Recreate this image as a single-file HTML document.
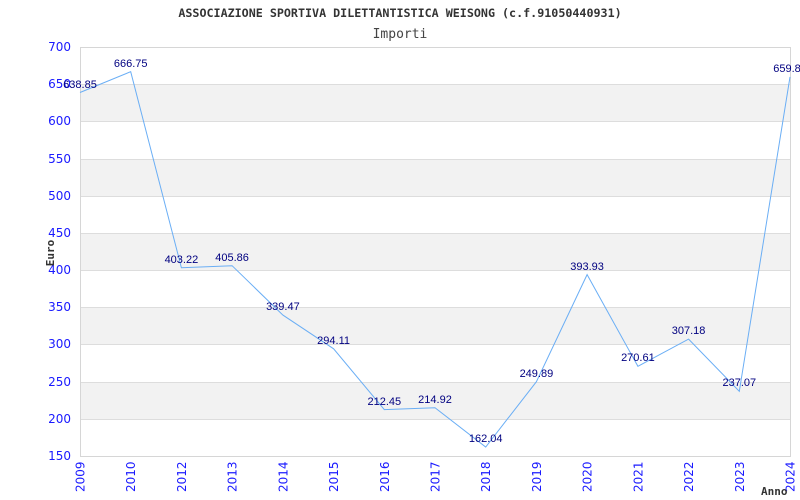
<!DOCTYPE html>
<html><head><meta charset="utf-8"><style>
html,body{margin:0;padding:0;background:#fff;}
svg{display:block;}
</style></head><body>
<svg width="800" height="500" xmlns="http://www.w3.org/2000/svg">
<rect width="800" height="500" fill="#fff"/>
<text x="400" y="17" text-anchor="middle" font-family="'DejaVu Sans Mono','Liberation Mono',monospace" font-weight="bold" font-size="11.7" fill="#333">ASSOCIAZIONE SPORTIVA DILETTANTISTICA WEISONG (c.f.91050440931)</text>
<text x="400" y="38" text-anchor="middle" font-family="'DejaVu Sans Mono','Liberation Mono',monospace" font-size="13" fill="#444">Importi</text>
<g fill="#f2f2f2">
<rect x="80" y="84" width="710" height="37"/>
<rect x="80" y="159" width="710" height="37"/>
<rect x="80" y="233" width="710" height="37"/>
<rect x="80" y="307" width="710" height="37"/>
<rect x="80" y="382" width="710" height="37"/>
</g>
<g stroke="#ddd" stroke-width="1">
<line x1="80" y1="84.5" x2="790" y2="84.5"/>
<line x1="80" y1="121.5" x2="790" y2="121.5"/>
<line x1="80" y1="159.5" x2="790" y2="159.5"/>
<line x1="80" y1="196.5" x2="790" y2="196.5"/>
<line x1="80" y1="233.5" x2="790" y2="233.5"/>
<line x1="80" y1="270.5" x2="790" y2="270.5"/>
<line x1="80" y1="307.5" x2="790" y2="307.5"/>
<line x1="80" y1="344.5" x2="790" y2="344.5"/>
<line x1="80" y1="382.5" x2="790" y2="382.5"/>
<line x1="80" y1="419.5" x2="790" y2="419.5"/>
</g>
<rect x="80.5" y="47.5" width="710" height="409" fill="none" stroke="#d6d6d6"/>
<g font-family="'DejaVu Sans','Liberation Sans',sans-serif" font-size="12" fill="#1a1aff" text-anchor="end">
<text x="71" y="51">700</text><text x="71" y="88">650</text><text x="71" y="125">600</text>
<text x="71" y="163">550</text><text x="71" y="200">500</text><text x="71" y="237">450</text>
<text x="71" y="274">400</text><text x="71" y="311">350</text><text x="71" y="348">300</text>
<text x="71" y="386">250</text><text x="71" y="423">200</text><text x="71" y="460">150</text>
</g>
<g font-family="'DejaVu Sans','Liberation Sans',sans-serif" font-size="12" fill="#1a1aff">
<text transform="translate(84.5,492) rotate(-90)">2009</text>
<text transform="translate(135.2,492) rotate(-90)">2010</text>
<text transform="translate(185.9,492) rotate(-90)">2012</text>
<text transform="translate(236.6,492) rotate(-90)">2013</text>
<text transform="translate(287.4,492) rotate(-90)">2014</text>
<text transform="translate(338.1,492) rotate(-90)">2015</text>
<text transform="translate(388.8,492) rotate(-90)">2016</text>
<text transform="translate(439.5,492) rotate(-90)">2017</text>
<text transform="translate(490.2,492) rotate(-90)">2018</text>
<text transform="translate(540.9,492) rotate(-90)">2019</text>
<text transform="translate(591.6,492) rotate(-90)">2020</text>
<text transform="translate(642.4,492) rotate(-90)">2021</text>
<text transform="translate(693.1,492) rotate(-90)">2022</text>
<text transform="translate(743.8,492) rotate(-90)">2023</text>
<text transform="translate(794.5,492) rotate(-90)">2024</text>
</g>
<text transform="translate(54,253) rotate(-90)" text-anchor="middle" font-family="'DejaVu Sans Mono','Liberation Mono',monospace" font-weight="bold" font-size="11" fill="#333">Euro</text>
<text x="761" y="495" font-family="'DejaVu Sans Mono','Liberation Mono',monospace" font-weight="bold" font-size="11" fill="#333">Anno</text>
<polyline fill="none" stroke="#6aaef5" stroke-width="1" points="80,92.5 130.7,71.7 181.4,267.7 232.1,265.7 282.9,315.1 333.6,348.8 384.3,409.6 435,407.7 485.7,447 536.4,381.7 587.1,274.6 637.9,366.3 688.6,339.1 739.3,391.3 790,76.9"/>
<g font-family="'Liberation Sans','DejaVu Sans',sans-serif" font-size="11" fill="#000080" text-anchor="middle">
<text x="80" y="88">638.85</text>
<text x="130.7" y="67">666.75</text>
<text x="181.4" y="263">403.22</text>
<text x="232.1" y="261">405.86</text>
<text x="282.9" y="310">339.47</text>
<text x="333.6" y="344">294.11</text>
<text x="384.3" y="405">212.45</text>
<text x="435" y="403">214.92</text>
<text x="485.7" y="442">162.04</text>
<text x="536.4" y="377">249.89</text>
<text x="587.1" y="270">393.93</text>
<text x="637.9" y="361">270.61</text>
<text x="688.6" y="334">307.18</text>
<text x="739.3" y="386">237.07</text>
<text x="787" y="72">659.8</text>
</g>
</svg>
</body></html>
